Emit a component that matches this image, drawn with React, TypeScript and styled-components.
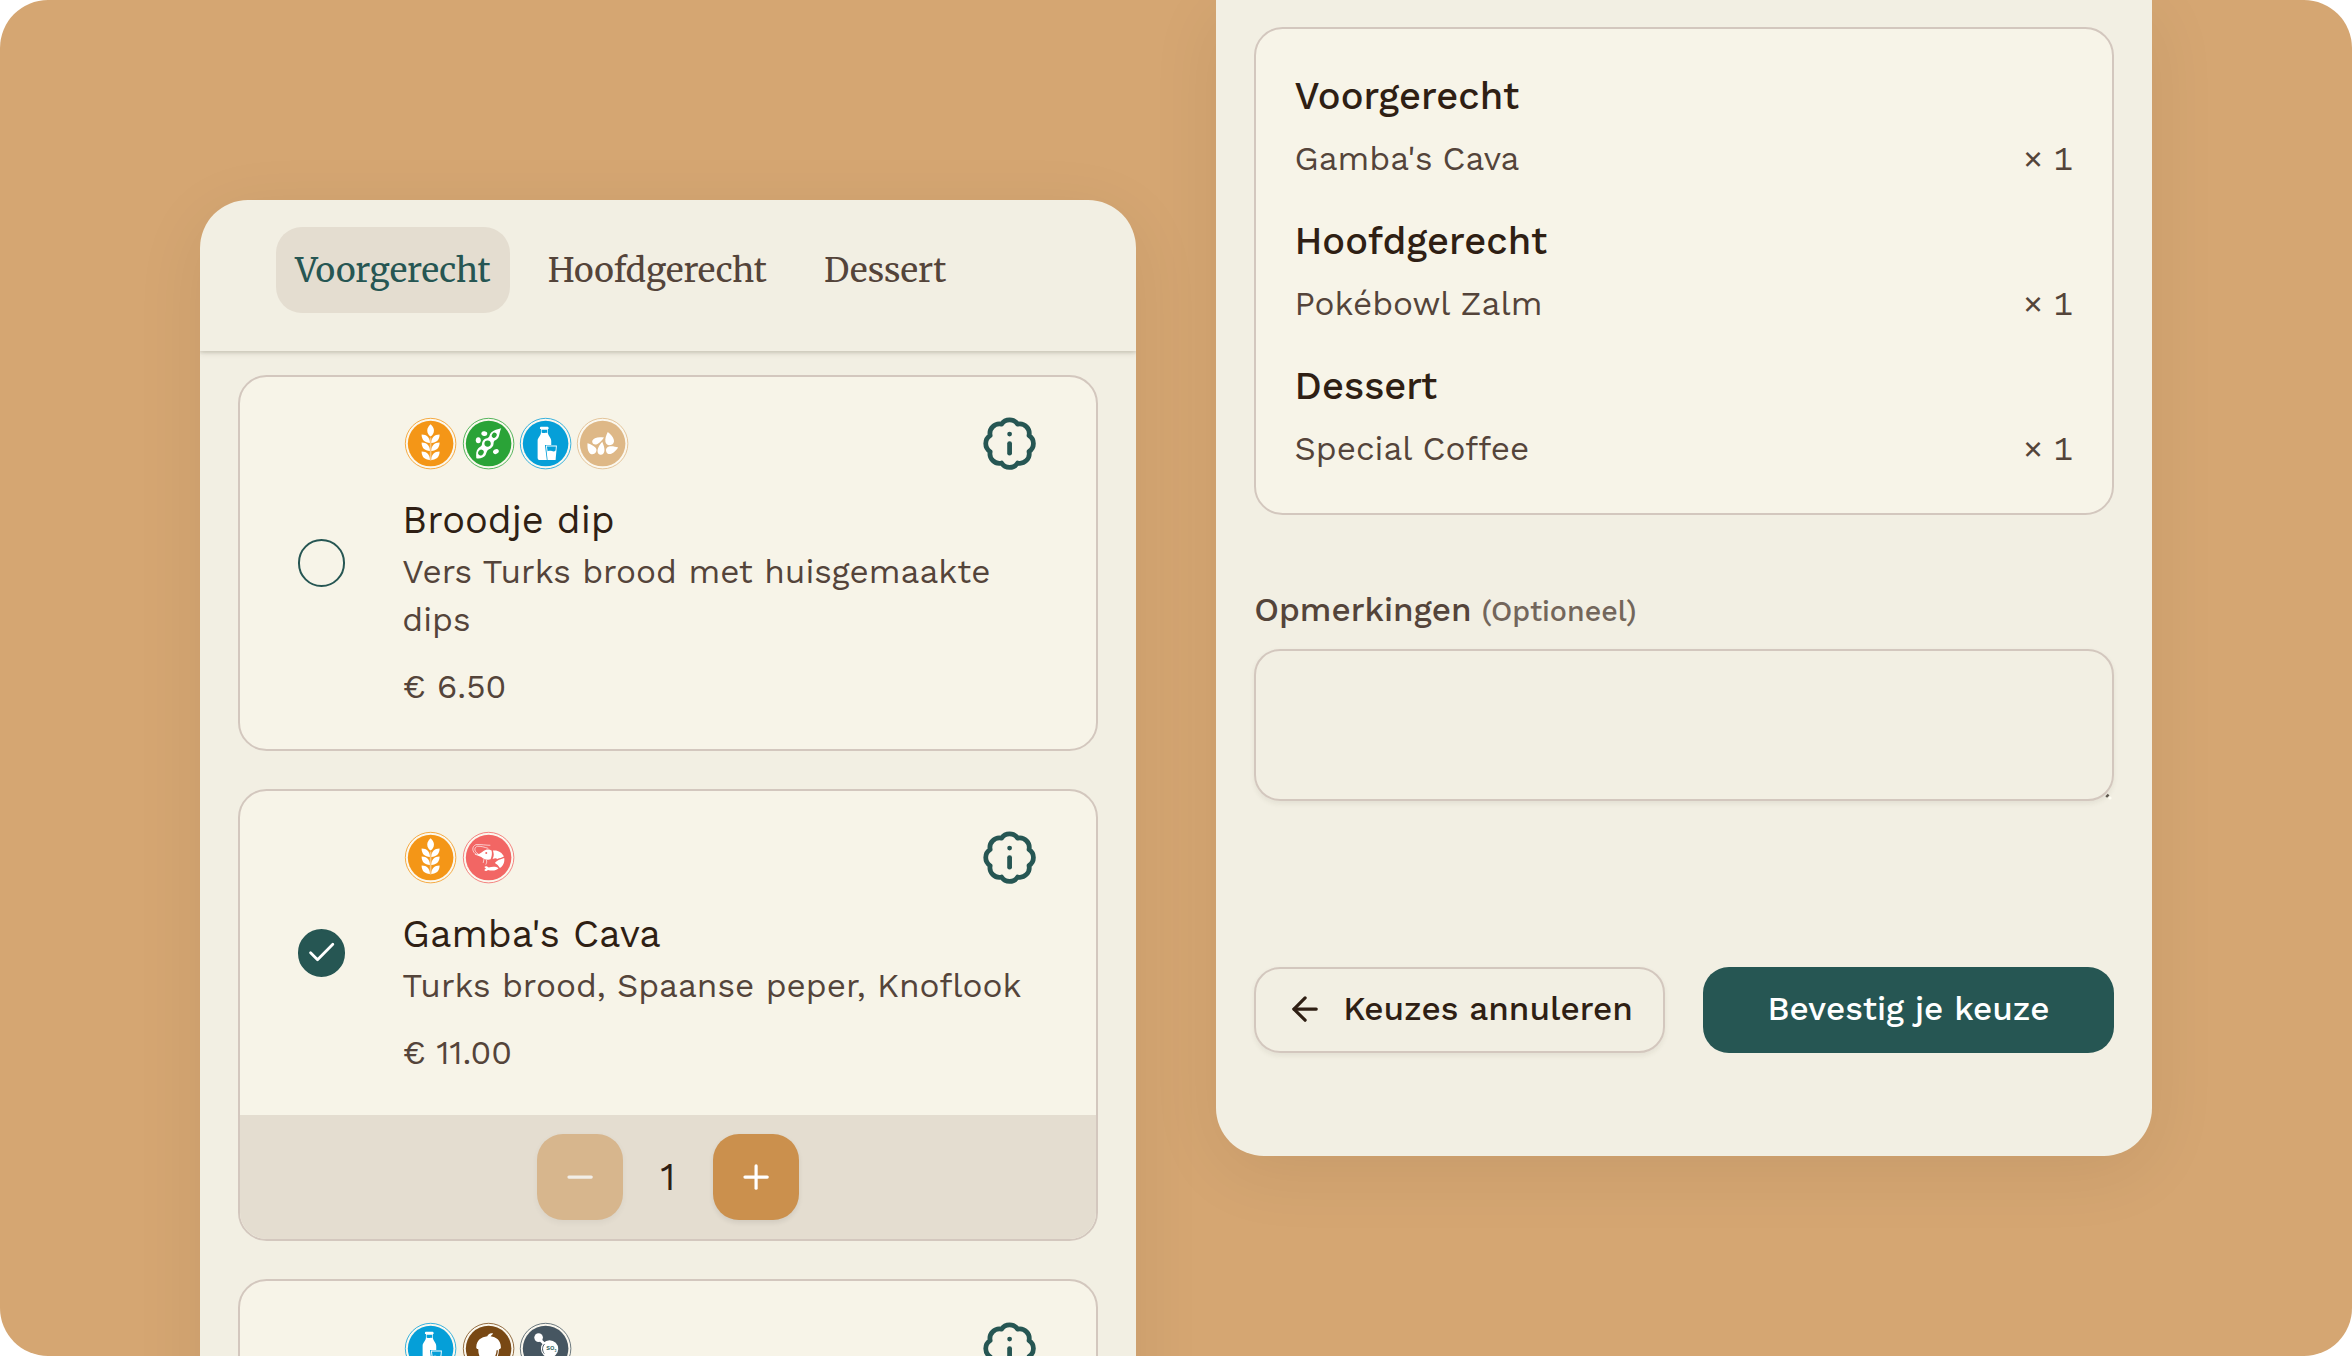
import React from "react";
import styled, { createGlobalStyle } from "styled-components";
import { ArrowLeft, BadgeInfo, Check, Minus, Plus } from "lucide-react";

const color = {
  backdrop: "#d5a672",
  panel: "#f2efe3",
  card: "#f7f4e8",
  line: "#d3c7be",
  muted: "#e4ddd0",
  teal: "#265653",
  ink: "#2f1f14",
  text: "#54443a",
  accent: "#cb904d",
};

const sans = '"Work Sans", "Open Sans", sans-serif';
const serif = '"Merriweather", "DejaVu Serif Condensed", serif';

const GlobalStyle = createGlobalStyle`
  *, *::before, *::after { box-sizing: border-box; }
  body { margin: 0; background: #fff; font-family: ${sans}; -webkit-font-smoothing: antialiased; }
  h2, h3, p, ul { margin: 0; padding: 0; font-weight: 400; }
  button, textarea { font: inherit; }
`;

const Stage = styled.main`
  display: flex;
  align-items: flex-start;
  gap: 80px;
  width: 2352px;
  height: 1356px;
  padding-left: 200px;
  overflow: hidden;
  background: ${color.backdrop};
  border-radius: 48px;
`;

const Phone = styled.section`
  width: 936px;
  flex: none;
  background: ${color.panel};
  box-shadow: 0 16px 72px rgba(20, 0, 0, 0.07);
`;

const MenuPhone = styled(Phone)`
  height: 1240px;
  margin-top: 200px;
  overflow: hidden;
  border-radius: 48px 48px 0 0;
`;

const OrderPhone = styled(Phone)`
  height: 1156px;
  padding: 26.6px 38.2px 0;
  border-radius: 0 0 48px 48px;
`;

const Tabs = styled.nav`
  display: flex;
  align-items: flex-start;
  gap: 18.8px;
  height: 151px;
  padding: 27.2px 76px 0;
  box-shadow: 0 2.4px 7px rgba(60, 50, 30, 0.14), 0 2px 2.4px rgba(60, 50, 30, 0.1);
`;

const Tab = styled.button<{ $active?: boolean }>`
  height: 85.8px;
  padding: 0 19.2px;
  border: 0;
  border-radius: 26px;
  font-family: ${serif};
  font-size: 33.5px;
  line-height: 48px;
  color: ${(p) => (p.$active ? color.teal : color.text)};
  background: ${(p) => (p.$active ? color.muted : "transparent")};
`;

const DishList = styled.div`
  display: flex;
  flex-direction: column;
  gap: 38.2px;
  padding: 24px 38.2px;
`;

const Card = styled.article`
  flex: none;
  overflow: hidden;
  background: ${color.card};
  border: 2.4px solid ${color.line};
  border-radius: 28.6px;
`;

const DishBody = styled.div`
  display: grid;
  grid-template-columns: 47.6px 1fr;
  align-items: center;
  column-gap: 57.2px;
  padding: 38.2px 57.4px 38.2px;
`;

const Radio = styled.span<{ $checked?: boolean }>`
  display: grid;
  place-items: center;
  width: 47.6px;
  height: 47.6px;
  border: 2.4px solid ${color.teal};
  border-radius: 50%;
  color: #fff;
  background: ${(p) => (p.$checked ? color.teal : "transparent")};
`;

const DishInfo = styled.div`
  align-self: start;
  min-width: 0;
`;

const DishTop = styled.div`
  display: flex;
  align-items: center;
  justify-content: space-between;
  height: 57.2px;
  margin-bottom: 20.7px;
  color: ${color.teal};
`;

const Allergens = styled.div`
  display: flex;

  svg {
    width: 57.2px;
    height: 57.2px;
  }
`;

const DishName = styled.h3`
  min-height: 55.4px;
  font-size: 38.1px;
  line-height: 55.4px;
  color: ${color.ink};
`;

const DishText = styled.p<{ $lines?: number }>`
  min-height: ${(p) => (p.$lines ?? 1) * 47.6}px;
  font-size: 33.35px;
  line-height: 47.6px;
  color: ${color.text};
`;

const Price = styled(DishText)`
  margin-top: 19.4px;
`;

const QuantityBar = styled.div`
  display: flex;
  align-items: center;
  justify-content: center;
  height: 124px;
  background: ${color.muted};
`;

const StepButton = styled.button`
  display: grid;
  place-items: center;
  width: 85.8px;
  height: 85.8px;
  padding: 0;
  border: 0;
  border-radius: 26px;
  color: #fff;
  background: ${color.accent};
  box-shadow: 0 2.4px 4.8px rgba(0, 0, 0, 0.08);

  &:disabled {
    opacity: 0.5;
  }
`;

const Quantity = styled.span`
  width: 90.8px;
  text-align: center;
  font-size: 38.1px;
  line-height: 57px;
  color: ${color.ink};
`;

const Summary = styled(Card)`
  display: flex;
  flex-direction: column;
  gap: 30.2px;
  height: 488px;
  padding: 39.6px 38.4px 0;
`;

const Course = styled.div`
  display: grid;
  row-gap: 9.6px;
`;

const CourseName = styled.h2`
  font-size: 38.1px;
  font-weight: 500;
  line-height: 57.2px;
  color: ${color.ink};
`;

const CourseLine = styled.div`
  display: flex;
  justify-content: space-between;
  font-size: 33.35px;
  line-height: 48px;
  color: ${color.text};
  font-variant-numeric: tabular-nums;
`;

const RemarksLabel = styled.label`
  display: flex;
  align-items: baseline;
  gap: 10px;
  margin-top: 71px;
  font-size: 33.35px;
  font-weight: 500;
  line-height: 48px;
  color: ${color.text};
`;

const Optional = styled.span`
  font-size: 28.6px;
  opacity: 0.8;
`;

const RemarksField = styled.div`
  position: relative;
  display: flex;
  height: 152px;
  margin-top: 14px;
`;

const RemarksInput = styled.textarea`
  flex: 1;
  padding: 19px 26px;
  border: 2.4px solid ${color.line};
  border-radius: 26px;
  resize: none;
  outline: none;
  color: ${color.ink};
  background: transparent;
  box-shadow: 0 2.4px 4.8px rgba(60, 50, 30, 0.07);
`;

const ResizeGrip = styled.svg`
  position: absolute;
  right: 2px;
  bottom: 1px;
  width: 7px;
  height: 7px;
`;

const Actions = styled.div`
  display: grid;
  grid-template-columns: 1fr 1fr;
  gap: 38.2px;
  margin-top: 166px;
`;

const ActionButton = styled.button<{ $primary?: boolean }>`
  display: flex;
  align-items: center;
  justify-content: center;
  gap: 19px;
  height: 86px;
  padding: 0 0 2px;
  border: ${(p) => (p.$primary ? "0" : `2.4px solid ${color.line}`)};
  border-radius: 26px;
  font-size: 33.35px;
  font-weight: 500;
  white-space: nowrap;
  color: ${(p) => (p.$primary ? "#fff" : color.ink)};
  background: ${(p) => (p.$primary ? color.teal : "transparent")};
  box-shadow: ${(p) => (p.$primary ? "none" : "0 2.4px 4.8px rgba(60, 50, 30, 0.07)")};
`;

type AllergenKind = "gluten" | "soy" | "milk" | "sesame" | "shrimp" | "nuts" | "sulphite";

const allergenColor: Record<AllergenKind, string> = {
  gluten: "#f49617",
  soy: "#2aa337",
  milk: "#059fd8",
  sesame: "#deb887",
  shrimp: "#f26664",
  nuts: "#784814",
  sulphite: "#465661",
};

const leaf = "M-27 -27 C-11 -27 -2 -17 -2 -2 C-18 -2 -27 -11 -27 -27Z";
const seed = "M0 -21 C7 -12 13 -3 13 6 C13 14 8 19 0 19 C-8 19 -13 14 -13 6 C-13 -3 -7 -12 0 -21Z";

const glyphs: Record<AllergenKind, React.ReactNode> = {
  gluten: (
    <>
      <path d="M0 -58 C8 -50 10 -45 10 -39 C10 -32 6 -26 0 -21 C-6 -26 -10 -32 -10 -39 C-10 -45 -8 -50 0 -58Z" />
      {[0, 24, 51].map((y) => (
        <g key={y} transform={`translate(0 ${y})`}>
          <path d={leaf} />
          <path d={leaf} transform="scale(-1 1)" />
        </g>
      ))}
      <rect x="-2.5" y="-18" width="5" height="69" opacity="0.45" />
    </>
  ),
  soy: (
    <>
      <path d="M38 -46 C25 -43 6 -38 3 -24 C2 -18 -2 -16 -8 -15 C-17 -12 -20 -4 -20 3 C-21 9 -26 10 -31 14 C-38 21 -38 32 -37 44 C-26 46 -14 42 -9 34 C-6 28 -6 22 0 18 C9 15 15 8 15 0 C15 -5 16 -9 22 -11 C34 -16 31 -32 38 -46Z" />
      <g fill={allergenColor.soy}>
        <ellipse cx="17" cy="-25" rx="7" ry="8" transform="rotate(35 17 -25)" />
        <circle cx="-3" cy="0" r="9.5" />
        <ellipse cx="-23" cy="27" rx="8" ry="9" transform="rotate(35 -23 27)" />
      </g>
      <ellipse cx="-13" cy="-30" rx="9" ry="7" transform="rotate(12 -13 -30)" />
      <ellipse cx="-31" cy="-10" rx="7.5" ry="9" />
      <ellipse cx="22" cy="24" rx="9" ry="7" transform="rotate(-30 22 24)" />
    </>
  ),
  milk: (
    <>
      <path d="M-14 -51 H6 Q9 -51 9 -47 V-44 H-17 V-47 Q-17 -51 -14 -51Z" />
      <path d="M-14 -46 H7 V-33 C7 -23 17 -18 17 -7 V49 H-19 Q-24 49 -24 43 V-7 C-24 -18 -14 -23 -14 -33Z" />
      <path d="M-12 -42 H5 V-31 C0 -35 -5 -29 -12 -33Z" fill={allergenColor.milk} />
      <path d="M-2 4 H37 L32 52 H4Z" fill={allergenColor.milk} />
      <path d="M1 6 H34 L30 49 H6Z" />
      <path d="M4 9 H31 L30 21 C23 28 18 18 6 23Z" fill={allergenColor.milk} />
    </>
  ),
  sesame: (
    <>
      <path d={seed} transform="translate(-14 -10) rotate(66) scale(.72 .95)" />
      <path d={seed} transform="translate(20 -14) rotate(-12)" />
      <path d={seed} transform="translate(-34 15) rotate(-35) scale(.92 .95)" />
      <path d={seed} transform="translate(-4 15) rotate(8) scale(.8 1)" />
      <path d={seed} transform="translate(28 18) rotate(72) scale(.88 .95)" />
    </>
  ),
  shrimp: (
    <>
      <path d="M-37 -8 C-25 -10 -18 -20 -6 -24 C0 -25 6 -23 9 -21 C11 -12 10 -3 6 5 C-4 8 -14 5 -22 -2 Z" />
      <path d="M13 -21 C28 -23 41 -15 46 -3 C40 1 33 2 26 4 C22 0 17 3 12 4 C17 -4 16 -12 13 -21Z" />
      <path d="M47 1 C49 14 44 25 34 31 C30 25 25 19 19 16 C23 10 36 4 47 1Z" />
      <path d="M30 32 C22 41 8 40 -2 37 C-6 42 -11 41 -13 37 L-8 33 L-13 28 C-8 24 -3 27 0 30 C10 27 22 26 30 32Z" />
      <path
        d="M-37 -9 C-51 -18 -51 -33 -38 -39 C-22 -40 -7 -37 4 -37 M-33 -12 C-45 -20 -43 -31 -34 -34 C-23 -35 -12 -31 -2 -28 M-40 -10 H-29 M-14 5 L-16 15 M-7 7 C-4 12 -6 16 -8 20"
        fill="none"
        stroke="#fff"
        strokeWidth="2"
        strokeLinecap="round"
      />
      <circle cx="-7" cy="-14" r="3" fill={allergenColor.shrimp} />
    </>
  ),
  nuts: (
    <>
      <path d="M-37 -5 C-36 -25 -22 -35 -4 -37 C-2 -43 4 -48 13 -46 C14 -42 8 -41 6 -37 C23 -35 36 -25 37 -5 C38 0 33 3 29 1 L25 5 C8 0 -8 0 -24 5 L-30 1 C-34 2 -38 -1 -37 -5Z" />
      <path d="M-31 0 H31 C32 25 19 42 0 50 C-19 42 -32 25 -31 0Z" />
      <path d="M26 5 C26 14 23 22 19 28" fill="none" stroke={allergenColor.nuts} strokeWidth="4" />
    </>
  ),
  sulphite: (
    <>
      <circle cx="-21" cy="-33" r="13" />
      <path d="M-18 -28 L0 -10" stroke="#fff" strokeWidth="8" />
      <circle cx="12" cy="1" r="26" />
      <path d="M8 22 L-6 38" stroke="#fff" strokeWidth="8" />
      <circle cx="-10" cy="42" r="11" />
      <path d="M-3 -14 C-11 -6 -11 7 -4 15" fill="none" stroke={allergenColor.sulphite} strokeWidth="3" />
      <text x="2" y="5" fontSize="18" fontWeight="600" fill="#30645d" fontFamily={sans}>
        SO
        <tspan dy="4" fontSize="10">
          2
        </tspan>
      </text>
    </>
  ),
};

function Allergen({ kind }: { kind: AllergenKind }) {
  const fill = allergenColor[kind];
  return (
    <svg viewBox="-86 -86 172 172" fill="#fff">
      <circle r="76" fill="#fbf8ef" stroke={fill} strokeWidth="2.8" strokeOpacity="0.85" />
      <circle r="68.5" fill={fill} />
      {glyphs[kind]}
    </svg>
  );
}

interface Dish {
  name?: string;
  text?: string;
  lines?: number;
  price?: string;
  allergens: AllergenKind[];
  quantity?: number;
}

const dishes: Dish[] = [
  {
    name: "Broodje dip",
    text: "Vers Turks brood met huisgemaakte dips",
    lines: 2,
    price: "€ 6.50",
    allergens: ["gluten", "soy", "milk", "sesame"],
  },
  {
    name: "Gamba's Cava",
    text: "Turks brood, Spaanse peper, Knoflook",
    price: "€ 11.00",
    allergens: ["gluten", "shrimp"],
    quantity: 1,
  },
  { lines: 2, allergens: ["milk", "nuts", "sulphite"] },
];

const order = [
  { course: "Voorgerecht", dish: "Gamba's Cava", count: 1 },
  { course: "Hoofdgerecht", dish: "Pokébowl Zalm", count: 1 },
  { course: "Dessert", dish: "Special Coffee", count: 1 },
];

function DishCard({ dish }: { dish: Dish }) {
  const checked = dish.quantity !== undefined;
  return (
    <Card>
      <DishBody>
        <Radio $checked={checked}>{checked && <Check size={33.4} strokeWidth={2} />}</Radio>
        <DishInfo>
          <DishTop>
            <Allergens>
              {dish.allergens.map((kind) => (
                <Allergen key={kind} kind={kind} />
              ))}
            </Allergens>
            <BadgeInfo size={57.2} />
          </DishTop>
          <DishName>{dish.name}</DishName>
          <DishText $lines={dish.lines}>{dish.text}</DishText>
          <Price>{dish.price}</Price>
        </DishInfo>
      </DishBody>
      {checked && (
        <QuantityBar>
          <StepButton disabled>
            <Minus size={38.2} />
          </StepButton>
          <Quantity>{dish.quantity}</Quantity>
          <StepButton>
            <Plus size={38.2} />
          </StepButton>
        </QuantityBar>
      )}
    </Card>
  );
}

export default function App() {
  return (
    <>
      <GlobalStyle />
      <Stage>
        <MenuPhone>
          <Tabs>
            <Tab $active>Voorgerecht</Tab>
            <Tab>Hoofdgerecht</Tab>
            <Tab>Dessert</Tab>
          </Tabs>
          <DishList>
            {dishes.map((dish, i) => (
              <DishCard key={i} dish={dish} />
            ))}
          </DishList>
        </MenuPhone>
        <OrderPhone>
          <Summary>
            {order.map((line) => (
              <Course key={line.course}>
                <CourseName>{line.course}</CourseName>
                <CourseLine>
                  <span>{line.dish}</span>
                  <span>× {line.count}</span>
                </CourseLine>
              </Course>
            ))}
          </Summary>
          <RemarksLabel htmlFor="remarks">
            Opmerkingen <Optional>(Optioneel)</Optional>
          </RemarksLabel>
          <RemarksField>
            <RemarksInput id="remarks" />
            <ResizeGrip viewBox="0 0 7 7">
              <circle cx="5" cy="5" r="1.6" fill="#fffdf4" />
              <path d="M1.2 4 L3.6 1.6" stroke="#5d574d" strokeWidth="2.4" />
            </ResizeGrip>
          </RemarksField>
          <Actions>
            <ActionButton>
              <ArrowLeft size={38.2} />
              Keuzes annuleren
            </ActionButton>
            <ActionButton $primary>Bevestig je keuze</ActionButton>
          </Actions>
        </OrderPhone>
      </Stage>
    </>
  );
}
